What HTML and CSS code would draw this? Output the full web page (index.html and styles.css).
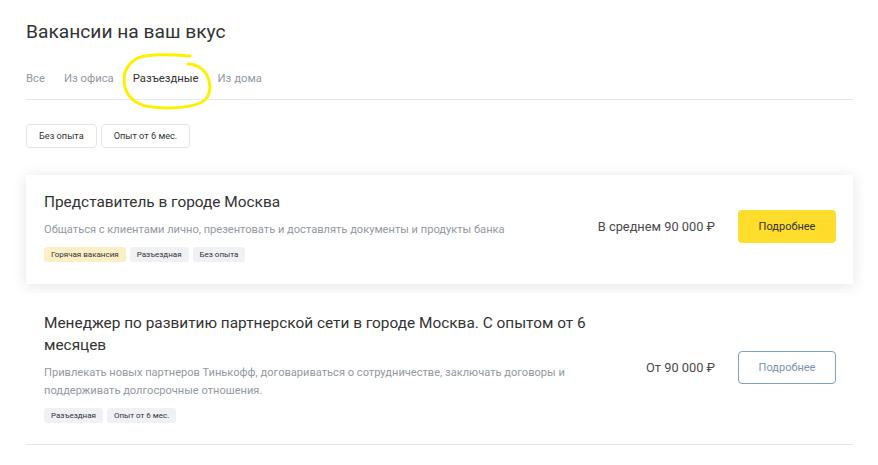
FILE: index.html
```html
<!DOCTYPE html>
<html lang="ru">
<head>
<meta charset="utf-8">
<link rel="stylesheet" href="styles.css">
</head>
<body>
<div class="page">
  <h1 class="title">Вакансии на ваш вкус</h1>
  <nav class="tabs">
    <span class="tab">Все</span>
    <span class="tab">Из офиса</span>
    <span class="tab tab-active">Разъездные
      <svg class="scribble" width="92" height="62" viewBox="0 0 92 62"><path d="M68,5 C45,3 22,3 14,8 C6,13 2,20 2,28 C2,42 10,54 30,56 C50,58 75,57 84,48 C90,40 89,26 80,18 C76,15 71,13 66,13" fill="none" stroke="#fff000" stroke-width="3" stroke-linecap="round" stroke-linejoin="round"/></svg>
    </span>
    <span class="tab">Из дома</span>
  </nav>
  <div class="chips">
    <span class="chip">Без опыта</span>
    <span class="chip">Опыт от 6 мес.</span>
  </div>
  <div class="card card-raised">
    <div class="info">
      <div class="job-title">Представитель в городе Москва</div>
      <div class="desc">Общаться с клиентами лично, презентовать и доставлять документы и продукты банка</div>
      <div class="tags">
        <span class="tag tag-hot">Горячая вакансия</span>
        <span class="tag">Разъездная</span>
        <span class="tag">Без опыта</span>
      </div>
    </div>
    <div class="price">В среднем 90 000 ₽</div>
    <span class="btn btn-yellow">Подробнее</span>
  </div>
  <div class="card card-plain">
    <div class="info">
      <div class="job-title">Менеджер по развитию партнерской сети в городе Москва. С опытом от 6 месяцев</div>
      <div class="desc">Привлекать новых партнеров Тинькофф, договариваться о сотрудничестве, заключать договоры и поддерживать долгосрочные отношения.</div>
      <div class="tags">
        <span class="tag">Разъездная</span>
        <span class="tag">Опыт от 6 мес.</span>
      </div>
    </div>
    <div class="price">От 90 000 ₽</div>
    <span class="btn btn-outline">Подробнее</span>
  </div>
</div>
</body>
</html>
```
FILE: styles.css
```css
* { box-sizing: border-box; }
body {
  margin: 0;
  background: #fff;
  font-family: Roboto, "Liberation Sans", Arial, sans-serif;
  color: #333;
}
.page {
  width: 827px;
  margin-left: 26px;
  padding-top: 18px;
}
.title {
  margin: 0;
  font-size: 19.2px;
  line-height: 28px;
  font-weight: 400;
  color: #333;
}
.tabs {
  display: flex;
  gap: 19px;
  margin-top: 25px;
  padding-bottom: 12px;
  border-bottom: 1px solid #e7e8ea;
  font-size: 11.3px;
  line-height: 16px;
}
.tab { color: #9299a2; position: relative; }
.tab-active { color: #333; }
.scribble {
  position: absolute;
  left: -11px;
  top: -20px;
  pointer-events: none;
}
.chips {
  display: flex;
  gap: 4px;
  margin-top: 24px;
}
.chip {
  height: 24px;
  padding: 0 12px;
  border: 1px solid #e3e5e8;
  border-radius: 4px;
  font-size: 9.2px;
  line-height: 22px;
  color: #333;
}
.card {
  display: flex;
  align-items: center;
  padding: 16px 17px 22px 18px;
  background: #fff;
}
.card-raised {
  margin-top: 27px;
  box-shadow: 0 2px 14px rgba(0,0,0,0.11);
}
.card-plain {
  margin-top: 9px;
  padding-top: 19px;
  padding-bottom: 21px;
  border-bottom: 1px solid #e7e8ea;
}
.info { width: 545px; }
.job-title {
  font-size: 15.4px;
  line-height: 22px;
  color: #333;
}
.desc {
  margin-top: 8px;
  font-size: 11.1px;
  line-height: 18px;
  color: #9299a2;
}
.tags {
  display: flex;
  gap: 4px;
  margin-top: 8px;
}
.tag {
  height: 15px;
  padding: 0 7px;
  border-radius: 3px;
  background: #eff1f4;
  font-size: 8px;
  line-height: 15px;
  color: #333;
}
.tag-hot { background: #fcefc6; }
.price {
  margin-left: auto;
  font-size: 12.8px;
  color: #4a4a4a;
}
.btn {
  margin-left: 23px;
  width: 98px;
  height: 33px;
  border-radius: 4px;
  font-size: 11px;
  text-align: center;
  line-height: 33px;
}
.btn-yellow {
  background: #ffdd2d;
  color: #333;
}
.btn-outline {
  border: 1px solid #7aa3c8;
  color: #7a93b3;
  line-height: 31px;
}
```
